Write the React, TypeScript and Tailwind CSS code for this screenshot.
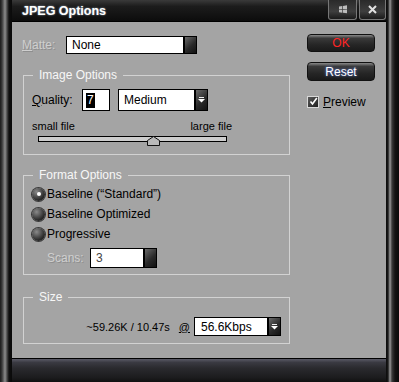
import React from 'react';

const DropButton = ({ arrow }: { arrow?: boolean }) => (
  <div className="w-[13px] h-full flex items-center justify-center border border-black bg-[linear-gradient(135deg,#6a6a6a,#2a2a2a_55%,#111)]">
    {arrow && (
      <svg width="7" height="6" viewBox="0 0 7 6">
        <rect x="1" y="0" width="5" height="1" fill="#eee" />
        <polygon points="0,2 7,2 3.5,5.5" fill="#fff" />
      </svg>
    )}
  </div>
);

const Radio = ({ checked, label }: { checked?: boolean; label: string }) => (
  <div className="h-[20px] flex items-center pl-[8px]">
    <div className="w-[13px] h-[13px] rounded-full flex items-center justify-center bg-[radial-gradient(circle_at_35%_30%,#8a8a8a,#2a2a2a_65%,#111)] shadow-[0_0_0_1px_#3a3a3a]">
      {checked && <div className="w-[4px] h-[4px] rounded-full bg-white" />}
    </div>
    <span className="ml-[2px] text-[12px] leading-[14px] text-black">{label}</span>
  </div>
);

const Group = ({ title, className, children }: { title: string; className?: string; children: React.ReactNode }) => (
  <fieldset className={`ml-[1px] w-[267px] border border-[#d2d2d2] ${className ?? ''}`}>
    <legend className="ml-[9px] px-[6px] text-[12px] leading-[14px] text-[#f7f7f7]">{title}</legend>
    {children}
  </fieldset>
);

const disabledText = 'text-[#cfcfcf] [text-shadow:1px_1px_0_#8e8e8e]';

export default function App() {
  return (
    <div className="w-[399px] h-[382px] flex bg-black font-['Liberation_Sans',Arial,sans-serif] select-none">
      {/* left frame */}
      <div className="w-[12px] h-full bg-[linear-gradient(to_right,#1a1a1a_0px,#3a3a3a_2px,#8c8c8c_5px,#4a4a4a_7px,#0e0e0e_9px,#0a0a0a_12px)]" />

      <div className="w-[374px] h-full flex flex-col">
        {/* title bar */}
        <div className="h-[22px] flex items-start bg-[linear-gradient(to_bottom,#3a3a3a,#1c1c1c_30%,#0c0c0c)] border-b border-black">
          <span className="pl-[10px] pt-[4px] text-[12.5px] leading-[14px] font-bold text-white [text-shadow:0_0_2px_#9ab]">
            JPEG Options
          </span>
          <div className="ml-auto flex gap-[2px]">
            <div className="w-[29px] h-[20px] flex items-center justify-center rounded-b-[3px] border border-t-0 border-[#777] bg-[linear-gradient(to_bottom,#2a2a2a,#3e3e3e_60%,#1a1a1a)]">
              <svg width="10" height="9" viewBox="0 0 10 9">
                <path d="M1 1.5 L4.3 1 L4.3 4 L1 4.2 Z" fill="#bcbcbc" />
                <path d="M5 0.9 L9 0.3 L9 3.9 L5 4 Z" fill="#bcbcbc" />
                <path d="M1 4.8 L4.3 4.7 L4.3 7.7 L1 7.2 Z" fill="#bcbcbc" />
                <path d="M5 4.7 L9 4.6 L9 8.3 L5 7.8 Z" fill="#bcbcbc" />
              </svg>
            </div>
            <div className="w-[27px] h-[20px] flex items-center justify-center rounded-b-[3px] border border-t-0 border-[#777] bg-[linear-gradient(to_bottom,#2a2a2a,#3e3e3e_60%,#1a1a1a)]">
              <svg width="9" height="9" viewBox="0 0 9 9">
                <path d="M1 1 L8 8 M8 1 L1 8" stroke="#e0e0e0" strokeWidth="2" />
              </svg>
            </div>
          </div>
        </div>

        {/* body */}
        <div className="h-[336px] flex bg-[#a4a4a4]">
          {/* left column */}
          <div className="w-[278px] pl-[10px] pt-[14px] flex flex-col">
            <div className="h-[18px] flex items-center">
              <span className={`w-[44px] text-[12px] leading-[14px] ${disabledText}`}>
                <span className="underline">M</span>atte:
              </span>
              <div className="h-full w-[118px] bg-white border border-black flex items-center pl-[5px] text-[12px] text-black">
                None
              </div>
              <DropButton />
            </div>

            <Group title="Image Options" className="mt-[14px] pb-[12px]">
              <div className="mt-[7px] h-[22px] flex items-center pl-[8px]">
                <span className="w-[50px] text-[12px] leading-[14px] text-black">
                  <span className="underline">Q</span>uality:
                </span>
                <div className="w-[28px] h-full bg-white border border-black flex items-center pl-[3px]">
                  <span className="bg-black text-white text-[12px] leading-[15px] px-[1px]">7</span>
                </div>
                <div className="ml-[8px] w-[90px] h-full flex">
                  <div className="flex-1 bg-white border border-black flex items-center pl-[5px] text-[12px] text-black">
                    Medium
                  </div>
                  <DropButton arrow />
                </div>
              </div>
              <div className="mt-[8px] ml-[8px] w-[200px] h-[14px] flex justify-between text-[11px] leading-[14px] text-black">
                <span>small file</span>
                <span>large file</span>
              </div>
              <div className="mt-[3px] ml-[14px] w-[189px] h-[6px] relative border border-black bg-[#cdcdcd]">
                <svg className="absolute left-[108px] top-[-1px]" width="13" height="10" viewBox="0 0 13 10">
                  <path d="M0.5 9.5 L0.5 4.5 L6.5 0.5 L12.5 4.5 L12.5 9.5 Z" fill="#b9b9b9" stroke="#111" />
                </svg>
              </div>
            </Group>

            <Group title="Format Options" className="mt-[13px] pb-[6px]">
              <div className="mt-[2px]">
                <Radio checked label="Baseline (“Standard”)" />
                <Radio label="Baseline Optimized" />
                <Radio label="Progressive" />
              </div>
              <div className="mt-[4px] h-[20px] flex items-center pl-[23px]">
                <span className={`w-[43px] text-[12px] leading-[14px] ${disabledText}`}>Scans:</span>
                <div className="w-[54px] h-full bg-white border border-black flex items-center pl-[5px] text-[12px] text-[#444]">
                  3
                </div>
                <DropButton />
              </div>
            </Group>

            <Group title="Size" className="mt-[15px] pb-[7px]">
              <div className="mt-[13px] h-[19px] flex items-center justify-end pr-[8px]">
                <span className="text-[11px] leading-[14px] text-black">~59.26K / 10.47s</span>
                <span className="ml-[9px] text-[11px] leading-[14px] text-black underline">@</span>
                <div className="ml-[4px] w-[87px] h-full flex">
                  <div className="flex-1 bg-white border border-black flex items-center pl-[6px] text-[12px] text-black">
                    56.6Kbps
                  </div>
                  <DropButton arrow />
                </div>
              </div>
            </Group>
          </div>

          {/* right column */}
          <div className="ml-[17px] w-[68px] pt-[12px] flex flex-col">
            <div className="h-[18px] rounded-[4px] border border-[#111] bg-[linear-gradient(to_bottom,#8a8a8a,#3a3a3a_20%,#262626_60%,#1a1a1a)] flex items-center justify-center text-[12px] text-[#ff2424]">
              OK
            </div>
            <div className="mt-[10px] h-[19px] rounded-[4px] border border-[#111] bg-[linear-gradient(to_bottom,#8a8a8a,#3a3a3a_20%,#262626_60%,#1a1a1a)] flex items-center justify-center text-[12px] text-white [text-shadow:0_0_3px_#6a8cff]">
              Reset
            </div>
            <div className="mt-[14px] h-[13px] flex items-center">
              <div className="w-[12px] h-[12px] border border-[#d8d8d8] bg-[linear-gradient(135deg,#5a5a5a,#1e1e1e)] flex items-center justify-center">
                <svg width="9" height="9" viewBox="0 0 9 9">
                  <path d="M1.5 4.5 L3.5 7 L7.8 1" stroke="#fff" strokeWidth="1.6" fill="none" />
                </svg>
              </div>
              <span className="ml-[4px] text-[12px] leading-[14px] text-black">
                <span className="underline">P</span>review
              </span>
            </div>
          </div>
        </div>

        {/* bottom bar */}
        <div className="h-[24px] border-t border-black bg-[linear-gradient(to_bottom,#5a5a66,#3a3a42_15%,#2a2a2e_40%,#1c1c1e_80%,#111)]" />
      </div>

      {/* right frame */}
      <div className="w-[13px] h-full bg-[linear-gradient(to_right,#0a0a0a_0px,#1a1a1a_2px,#9a9a9a_4px,#3a3a3a_6px,#141414_9px,#0a0a0a_13px)]" />
    </div>
  );
}
